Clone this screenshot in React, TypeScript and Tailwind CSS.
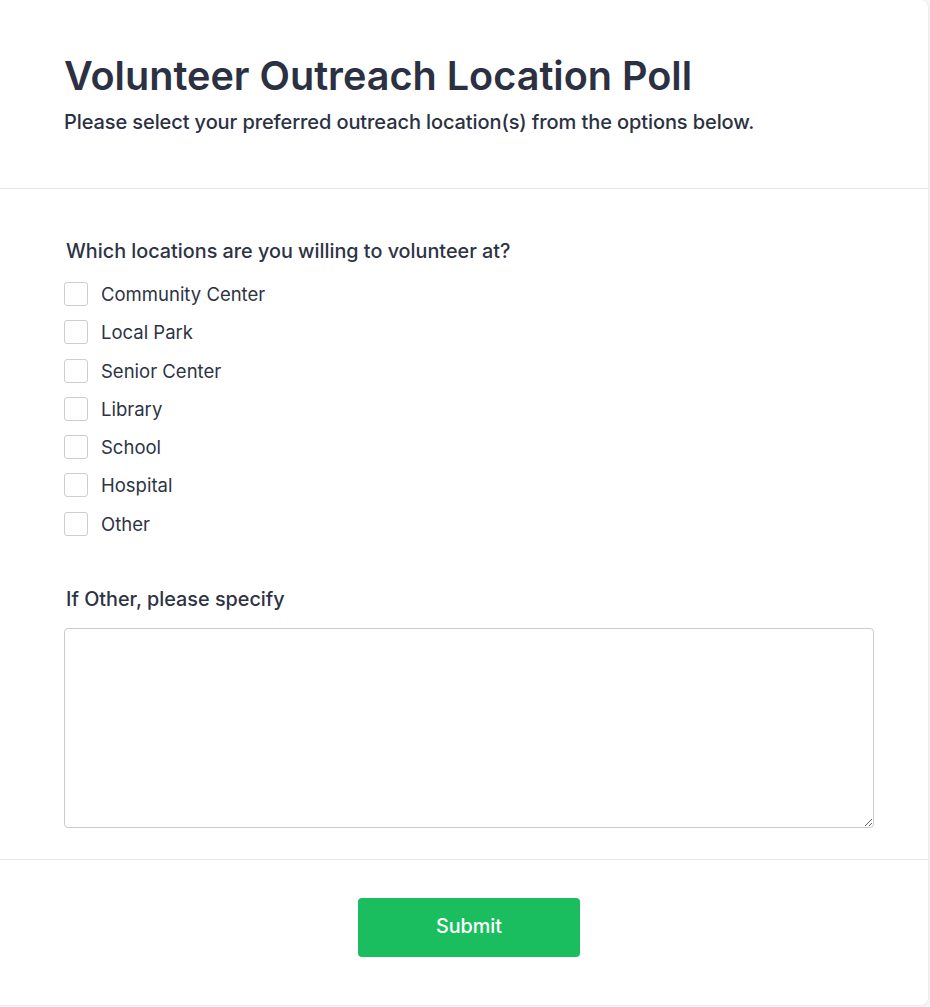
import { useState } from 'react';

const LOCATIONS = ['Community Center', 'Local Park', 'Senior Center', 'Library', 'School', 'Hospital', 'Other'];

export default function App() {
  const [checked, setChecked] = useState<Record<string, boolean>>({});
  const [other, setOther] = useState('');

  return (
    <div className="min-h-screen bg-[#f5f5f7] font-['Inter','Noto_Sans',sans-serif] text-[#2d3344]">
      <div className="w-[929px] bg-white rounded-r-lg border-r border-b border-[#ececf1]">
        {/* Header */}
        <div className="pl-16 pr-[54px] pt-[56px] pb-[52px] border-b border-[#e3e3ec]">
          <h1 className="text-[39.6px] leading-10 font-semibold text-[#2b3142]">Volunteer Outreach Location Poll</h1>
          <p className="mt-[12px] text-[20px] leading-7 font-medium tracking-[-0.005em] text-[#2b3142]">
            Please select your preferred outreach location(s) from the options below.
          </p>
        </div>

        {/* Questions */}
        <div className="pl-16 pr-[54px] pt-12 pb-[31px] border-b border-[#e8e8ef]">
          <p className="ml-[2px] text-[19.8px] leading-7 font-medium">Which locations are you willing to volunteer at?</p>
          <div className="mt-[17px] flex flex-col gap-[14.3px]">
            {LOCATIONS.map((loc) => (
              <label key={loc} className="flex items-center gap-[13px] h-6 cursor-pointer">
                <input
                  type="checkbox"
                  checked={!!checked[loc]}
                  onChange={() => setChecked({ ...checked, [loc]: !checked[loc] })}
                  className="appearance-none w-6 h-6 rounded-[3px] border border-[#cbced8] bg-white checked:bg-[#19be5e] checked:border-[#19be5e]"
                />
                <span className="text-[18.5px] leading-6 text-[#2d3344]">{loc}</span>
              </label>
            ))}
          </div>

          <p className="mt-[49px] ml-[2px] text-[19.8px] leading-7 font-medium">If Other, please specify</p>
          <textarea
            value={other}
            onChange={(e) => setOther(e.target.value)}
            className="mt-[15px] block w-full h-[200px] rounded-[4px] border border-[#c9ccd6] bg-white px-3 py-2 text-base outline-none"
          />
        </div>

        {/* Footer */}
        <div className="flex justify-center pl-16 pr-[54px] pt-[38px] pb-[48px]">
          <button className="w-[222px] h-[59px] rounded-[4px] bg-[#1abe5e] text-white text-[19.8px] font-medium">
            Submit
          </button>
        </div>
      </div>
    </div>
  );
}
